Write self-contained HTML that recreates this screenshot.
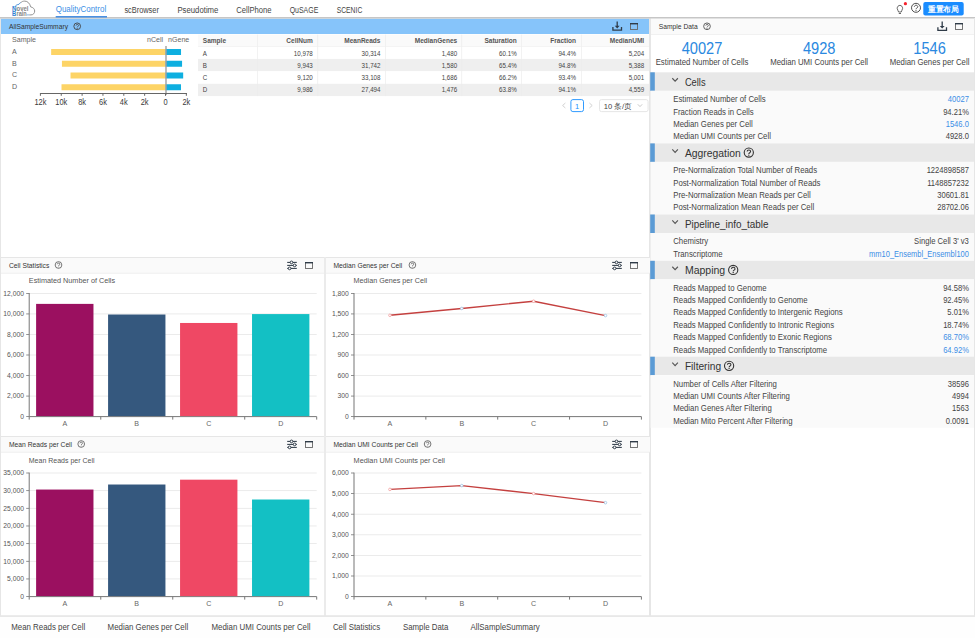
<!DOCTYPE html>
<html><head><meta charset="utf-8"><style>
html,body{margin:0;padding:0;background:#fff;width:975px;height:638px;overflow:hidden}
svg{display:block;font-family:"Liberation Sans",sans-serif}
</style></head><body>
<svg width="975" height="638" viewBox="0 0 975 638">
<rect x="0.00" y="17.00" width="975.00" height="1.30" fill="#c6c6c6"/>
<path d="M20.5,2.9 C21.5,1.6 23,1.1 24.8,1.1 C27.5,1.1 29.8,3.3 30.7,6.9 C33,7.3 34.7,9 34.7,11 C34.7,13.2 33.2,14.9 31,14.9 L29.5,14.9" stroke="#8c8c8c" stroke-width="0.95" fill="none"/>
<path d="M14.7,6.9 C15.5,5.6 16.8,4.6 18.9,4.3 C19.3,3.6 19.8,3.1 20.5,2.9" stroke="#3a86d4" stroke-width="0.95" fill="none"/>
<path d="M26.8,14.9 L29.6,14.9" stroke="#6e9fd0" stroke-width="0.8" fill="none"/>
<text x="11.9" y="10.6" font-size="6.6" font-weight="bold" fill="#2f80d2" textLength="4.5" lengthAdjust="spacingAndGlyphs">N</text>
<text x="16.5" y="10.7" font-size="6.9" font-weight="bold" fill="#858585" textLength="12" lengthAdjust="spacingAndGlyphs">ovel</text>
<text x="11.9" y="15.9" font-size="6.6" font-weight="bold" fill="#2f80d2" textLength="4.2" lengthAdjust="spacingAndGlyphs">B</text>
<text x="16.5" y="15.8" font-size="6.9" font-weight="bold" fill="#858585" textLength="10.3" lengthAdjust="spacingAndGlyphs">rain</text>
<text x="55.70" y="12.10" font-size="8.6" fill="#3b8fe6" text-anchor="start" textLength="50.49" lengthAdjust="spacingAndGlyphs">QualityControl</text>
<rect x="55.70" y="16.00" width="51.30" height="1.60" fill="#4a90e2"/>
<text x="124.40" y="12.50" font-size="8.5" fill="#444" text-anchor="start" textLength="34.50" lengthAdjust="spacingAndGlyphs">scBrowser</text>
<text x="177.40" y="12.50" font-size="8.5" fill="#444" text-anchor="start" textLength="41.00" lengthAdjust="spacingAndGlyphs">Pseudotime</text>
<text x="236.30" y="12.50" font-size="8.5" fill="#444" text-anchor="start" textLength="35.20" lengthAdjust="spacingAndGlyphs">CellPhone</text>
<text x="289.70" y="12.50" font-size="8.5" fill="#444" text-anchor="start" textLength="28.60" lengthAdjust="spacingAndGlyphs">QuSAGE</text>
<text x="336.70" y="12.50" font-size="8.5" fill="#444" text-anchor="start" textLength="25.60" lengthAdjust="spacingAndGlyphs">SCENIC</text>
<path d="M897.2,8.4 C897.2,6.6 898.4,5.4 899.9,5.4 C901.4,5.4 902.6,6.6 902.6,8.4 C902.6,9.8 901.4,10.6 901.2,12 L898.6,12 C898.4,10.6 897.2,9.8 897.2,8.4 Z M898.8,13.5 L901,13.5" stroke="#555" stroke-width="0.9" fill="none"/>
<circle cx="905.4" cy="3.7" r="1.6" fill="#f5222d"/>
<rect x="923.3" y="2" width="40.4" height="13.6" rx="2" fill="#1a8cff"/>
<text x="943.3" y="12.2" font-size="7.8" font-weight="bold" fill="#fff" text-anchor="middle" textLength="31" lengthAdjust="spacingAndGlyphs">重置布局</text>
<circle cx="916" cy="7.8" r="4.5" fill="none" stroke="#444" stroke-width="0.95"/>
<path d="M914.38,6.81 C914.38,4.74 917.80,4.74 917.80,6.81 C917.80,8.03 916.00,7.89 916.00,9.15" stroke="#444" stroke-width="0.9025" fill="none"/>
<circle cx="916" cy="10.32" r="0.57" fill="#444"/>
<rect x="0.00" y="18.00" width="1.00" height="598.00" fill="#e6e6e6"/>
<rect x="1.00" y="18.40" width="648.00" height="15.60" fill="#86c4fa"/>
<rect x="649.00" y="18.00" width="2.00" height="598.00" fill="#e6e6e6"/>
<rect x="0.00" y="18.00" width="975.00" height="0.80" fill="#d6d6d6"/>
<text x="9.00" y="28.70" font-size="7.6" fill="#333" text-anchor="start" textLength="59.00" lengthAdjust="spacingAndGlyphs">AllSampleSummary</text>
<circle cx="77.2" cy="26.3" r="3.35" fill="none" stroke="#444" stroke-width="0.9"/>
<path d="M75.99,25.56 C75.99,24.02 78.54,24.02 78.54,25.56 C78.54,26.47 77.20,26.37 77.20,27.30" stroke="#444" stroke-width="0.855" fill="none"/>
<circle cx="77.2" cy="28.18" r="0.54" fill="#444"/>
<path d="M612.9000000000001,27.099999999999998 L612.9000000000001,30.2 L621.5,30.2 L621.5,27.099999999999998" stroke="#2f3b48" stroke-width="1.3" fill="none"/>
<path d="M617.2,21.4 L617.2,26.9" stroke="#2f3b48" stroke-width="1.3" fill="none"/>
<path d="M614.8000000000001,25.7 L617.2,28.4 L619.6,25.7 Z" stroke="none" stroke-width="1" fill="#2f3b48"/>
<rect x="630.50" y="23.50" width="7.00" height="6.00" fill="none" stroke="#666" stroke-width="0.9"/>
<rect x="630.00" y="23.00" width="8.00" height="1.40" fill="#2f3b48"/>
<text x="12.00" y="41.80" font-size="7.9" fill="#666" text-anchor="start" textLength="24.00" lengthAdjust="spacingAndGlyphs">Sample</text>
<text x="147.00" y="41.90" font-size="7.9" fill="#666" text-anchor="start" textLength="16.13" lengthAdjust="spacingAndGlyphs">nCell</text>
<text x="168.00" y="41.90" font-size="7.9" fill="#666" text-anchor="start" textLength="21.26" lengthAdjust="spacingAndGlyphs">nGene</text>
<text x="12.00" y="53.80" font-size="7.9" fill="#666" text-anchor="start" textLength="4.72" lengthAdjust="spacingAndGlyphs">A</text>
<rect x="51.15" y="49.00" width="114.45" height="6.00" fill="#fdd466"/>
<rect x="165.60" y="49.00" width="15.43" height="6.00" fill="#0eafe0"/>
<text x="12.00" y="65.55" font-size="7.9" fill="#666" text-anchor="start" textLength="4.72" lengthAdjust="spacingAndGlyphs">B</text>
<rect x="61.94" y="60.75" width="103.66" height="6.00" fill="#fdd466"/>
<rect x="165.60" y="60.75" width="16.47" height="6.00" fill="#0eafe0"/>
<text x="12.00" y="77.30" font-size="7.9" fill="#666" text-anchor="start" textLength="5.11" lengthAdjust="spacingAndGlyphs">C</text>
<rect x="70.52" y="72.50" width="95.08" height="6.00" fill="#fdd466"/>
<rect x="165.60" y="72.50" width="17.58" height="6.00" fill="#0eafe0"/>
<text x="12.00" y="89.05" font-size="7.9" fill="#666" text-anchor="start" textLength="5.11" lengthAdjust="spacingAndGlyphs">D</text>
<rect x="61.50" y="84.25" width="104.10" height="6.00" fill="#fdd466"/>
<rect x="165.60" y="84.25" width="15.39" height="6.00" fill="#0eafe0"/>
<rect x="165.30" y="46.00" width="1.40" height="49.00" fill="#a0a0a0"/>
<rect x="40.40" y="93.00" width="146.60" height="1.00" fill="#666"/>
<rect x="39.90" y="93.00" width="1.00" height="2.80" fill="#666"/>
<text x="40.40" y="104.70" font-size="8.6" fill="#3a3a3a" text-anchor="middle" textLength="11.99" lengthAdjust="spacingAndGlyphs">12k</text>
<rect x="60.75" y="93.00" width="1.00" height="2.80" fill="#666"/>
<text x="61.25" y="104.70" font-size="8.6" fill="#3a3a3a" text-anchor="middle" textLength="11.99" lengthAdjust="spacingAndGlyphs">10k</text>
<rect x="81.60" y="93.00" width="1.00" height="2.80" fill="#666"/>
<text x="82.10" y="104.70" font-size="8.6" fill="#3a3a3a" text-anchor="middle" textLength="7.86" lengthAdjust="spacingAndGlyphs">8k</text>
<rect x="102.45" y="93.00" width="1.00" height="2.80" fill="#666"/>
<text x="102.95" y="104.70" font-size="8.6" fill="#3a3a3a" text-anchor="middle" textLength="7.86" lengthAdjust="spacingAndGlyphs">6k</text>
<rect x="123.30" y="93.00" width="1.00" height="2.80" fill="#666"/>
<text x="123.80" y="104.70" font-size="8.6" fill="#3a3a3a" text-anchor="middle" textLength="7.86" lengthAdjust="spacingAndGlyphs">4k</text>
<rect x="144.15" y="93.00" width="1.00" height="2.80" fill="#666"/>
<text x="144.65" y="104.70" font-size="8.6" fill="#3a3a3a" text-anchor="middle" textLength="7.86" lengthAdjust="spacingAndGlyphs">2k</text>
<rect x="165.00" y="93.00" width="1.00" height="2.80" fill="#666"/>
<text x="165.50" y="104.70" font-size="8.6" fill="#3a3a3a" text-anchor="middle" textLength="4.14" lengthAdjust="spacingAndGlyphs">0</text>
<rect x="185.85" y="93.00" width="1.00" height="2.80" fill="#666"/>
<text x="186.35" y="104.70" font-size="8.6" fill="#3a3a3a" text-anchor="middle" textLength="7.86" lengthAdjust="spacingAndGlyphs">2k</text>
<rect x="198.00" y="34.60" width="451.00" height="12.00" fill="#fafafa"/>
<rect x="198.00" y="46.60" width="451.00" height="12.30" fill="#ffffff"/>
<rect x="198.00" y="58.90" width="451.00" height="12.30" fill="#efefef"/>
<rect x="198.00" y="71.50" width="451.00" height="12.30" fill="#ffffff"/>
<rect x="198.00" y="83.80" width="451.00" height="12.30" fill="#efefef"/>
<rect x="257.30" y="34.60" width="0.70" height="61.50" fill="#ececec"/>
<rect x="317.40" y="34.60" width="0.70" height="61.50" fill="#ececec"/>
<rect x="385.20" y="34.60" width="0.70" height="61.50" fill="#ececec"/>
<rect x="461.40" y="34.60" width="0.70" height="61.50" fill="#ececec"/>
<rect x="521.20" y="34.60" width="0.70" height="61.50" fill="#ececec"/>
<rect x="581.00" y="34.60" width="0.70" height="61.50" fill="#ececec"/>
<rect x="198.00" y="46.30" width="451.00" height="0.60" fill="#eeeeee"/>
<text x="202.80" y="43.10" font-size="6.9" font-weight="bold" fill="#555" text-anchor="start" textLength="23.23" lengthAdjust="spacingAndGlyphs">Sample</text>
<text x="312.80" y="43.10" font-size="6.9" font-weight="bold" fill="#555" text-anchor="end" textLength="26.49" lengthAdjust="spacingAndGlyphs">CellNum</text>
<text x="380.50" y="43.10" font-size="6.9" font-weight="bold" fill="#555" text-anchor="end" textLength="36.29" lengthAdjust="spacingAndGlyphs">MeanReads</text>
<text x="457.20" y="43.10" font-size="6.9" font-weight="bold" fill="#555" text-anchor="end" textLength="42.45" lengthAdjust="spacingAndGlyphs">MedianGenes</text>
<text x="516.70" y="43.10" font-size="6.9" font-weight="bold" fill="#555" text-anchor="end" textLength="32.29" lengthAdjust="spacingAndGlyphs">Saturation</text>
<text x="576.00" y="43.10" font-size="6.9" font-weight="bold" fill="#555" text-anchor="end" textLength="25.76" lengthAdjust="spacingAndGlyphs">Fraction</text>
<text x="644.20" y="43.10" font-size="6.9" font-weight="bold" fill="#555" text-anchor="end" textLength="34.46" lengthAdjust="spacingAndGlyphs">MedianUMI</text>
<text x="202.80" y="55.70" font-size="7.5" fill="#444" text-anchor="start" textLength="4.14" lengthAdjust="spacingAndGlyphs">A</text>
<text x="312.80" y="55.70" font-size="7.5" fill="#444" text-anchor="end" textLength="18.99" lengthAdjust="spacingAndGlyphs">10,978</text>
<text x="380.50" y="55.70" font-size="7.5" fill="#444" text-anchor="end" textLength="18.99" lengthAdjust="spacingAndGlyphs">30,314</text>
<text x="457.20" y="55.70" font-size="7.5" fill="#444" text-anchor="end" textLength="15.54" lengthAdjust="spacingAndGlyphs">1,480</text>
<text x="516.70" y="55.70" font-size="7.5" fill="#444" text-anchor="end" textLength="17.61" lengthAdjust="spacingAndGlyphs">60.1%</text>
<text x="576.00" y="55.70" font-size="7.5" fill="#444" text-anchor="end" textLength="17.61" lengthAdjust="spacingAndGlyphs">94.4%</text>
<text x="644.20" y="55.70" font-size="7.5" fill="#444" text-anchor="end" textLength="15.54" lengthAdjust="spacingAndGlyphs">5,204</text>
<text x="202.80" y="67.70" font-size="7.5" fill="#444" text-anchor="start" textLength="4.14" lengthAdjust="spacingAndGlyphs">B</text>
<text x="312.80" y="67.70" font-size="7.5" fill="#444" text-anchor="end" textLength="15.54" lengthAdjust="spacingAndGlyphs">9,943</text>
<text x="380.50" y="67.70" font-size="7.5" fill="#444" text-anchor="end" textLength="18.99" lengthAdjust="spacingAndGlyphs">31,742</text>
<text x="457.20" y="67.70" font-size="7.5" fill="#444" text-anchor="end" textLength="15.54" lengthAdjust="spacingAndGlyphs">1,580</text>
<text x="516.70" y="67.70" font-size="7.5" fill="#444" text-anchor="end" textLength="17.61" lengthAdjust="spacingAndGlyphs">65.4%</text>
<text x="576.00" y="67.70" font-size="7.5" fill="#444" text-anchor="end" textLength="17.61" lengthAdjust="spacingAndGlyphs">94.8%</text>
<text x="644.20" y="67.70" font-size="7.5" fill="#444" text-anchor="end" textLength="15.54" lengthAdjust="spacingAndGlyphs">5,388</text>
<text x="202.80" y="80.10" font-size="7.5" fill="#444" text-anchor="start" textLength="4.48" lengthAdjust="spacingAndGlyphs">C</text>
<text x="312.80" y="80.10" font-size="7.5" fill="#444" text-anchor="end" textLength="15.54" lengthAdjust="spacingAndGlyphs">9,120</text>
<text x="380.50" y="80.10" font-size="7.5" fill="#444" text-anchor="end" textLength="18.99" lengthAdjust="spacingAndGlyphs">33,108</text>
<text x="457.20" y="80.10" font-size="7.5" fill="#444" text-anchor="end" textLength="15.54" lengthAdjust="spacingAndGlyphs">1,686</text>
<text x="516.70" y="80.10" font-size="7.5" fill="#444" text-anchor="end" textLength="17.61" lengthAdjust="spacingAndGlyphs">66.2%</text>
<text x="576.00" y="80.10" font-size="7.5" fill="#444" text-anchor="end" textLength="17.61" lengthAdjust="spacingAndGlyphs">93.4%</text>
<text x="644.20" y="80.10" font-size="7.5" fill="#444" text-anchor="end" textLength="15.54" lengthAdjust="spacingAndGlyphs">5,001</text>
<text x="202.80" y="92.20" font-size="7.5" fill="#444" text-anchor="start" textLength="4.48" lengthAdjust="spacingAndGlyphs">D</text>
<text x="312.80" y="92.20" font-size="7.5" fill="#444" text-anchor="end" textLength="15.54" lengthAdjust="spacingAndGlyphs">9,986</text>
<text x="380.50" y="92.20" font-size="7.5" fill="#444" text-anchor="end" textLength="18.99" lengthAdjust="spacingAndGlyphs">27,494</text>
<text x="457.20" y="92.20" font-size="7.5" fill="#444" text-anchor="end" textLength="15.54" lengthAdjust="spacingAndGlyphs">1,476</text>
<text x="516.70" y="92.20" font-size="7.5" fill="#444" text-anchor="end" textLength="17.61" lengthAdjust="spacingAndGlyphs">63.8%</text>
<text x="576.00" y="92.20" font-size="7.5" fill="#444" text-anchor="end" textLength="17.61" lengthAdjust="spacingAndGlyphs">94.1%</text>
<text x="644.20" y="92.20" font-size="7.5" fill="#444" text-anchor="end" textLength="15.54" lengthAdjust="spacingAndGlyphs">4,559</text>
<path d="M565.4,103 L562.6,105.5 L565.4,108" stroke="#c8c8c8" stroke-width="0.8" fill="none"/>
<rect x="570.9" y="99.6" width="12.6" height="12" rx="2" fill="#fff" stroke="#1890ff" stroke-width="0.9"/>
<text x="577.2" y="108.6" font-size="7.5" fill="#1890ff" text-anchor="middle">1</text>
<path d="M589.4,103 L592.2,105.5 L589.4,108" stroke="#c8c8c8" stroke-width="0.8" fill="none"/>
<rect x="599.5" y="99.6" width="48.6" height="12" rx="2" fill="#fff" stroke="#e3e3e3" stroke-width="0.9"/>
<text x="603.8" y="109" font-size="8" fill="#444" textLength="28" lengthAdjust="spacingAndGlyphs">10 条/页</text>
<path d="M637.8,104.3 L640,106.6 L642.2,104.3" stroke="#bbb" stroke-width="0.8" fill="none"/>
<rect x="974.00" y="18.00" width="1.00" height="598.00" fill="#e6e6e6"/>
<rect x="651.00" y="18.80" width="323.00" height="15.20" fill="#fafafa"/>
<rect x="651.00" y="34.00" width="323.00" height="0.80" fill="#eeeeee"/>
<text x="658.80" y="29.00" font-size="7.6" fill="#333" text-anchor="start" textLength="38.84" lengthAdjust="spacingAndGlyphs">Sample Data</text>
<circle cx="707" cy="26.3" r="3.35" fill="none" stroke="#555" stroke-width="0.9"/>
<path d="M705.79,25.56 C705.79,24.02 708.34,24.02 708.34,25.56 C708.34,26.47 707.00,26.37 707.00,27.30" stroke="#555" stroke-width="0.855" fill="none"/>
<circle cx="707" cy="28.18" r="0.54" fill="#555"/>
<path d="M937.9000000000001,27.3 L937.9000000000001,30.400000000000002 L946.5,30.400000000000002 L946.5,27.3" stroke="#2f3b48" stroke-width="1.3" fill="none"/>
<path d="M942.2,21.6 L942.2,27.1" stroke="#2f3b48" stroke-width="1.3" fill="none"/>
<path d="M939.8000000000001,25.900000000000002 L942.2,28.6 L944.6,25.900000000000002 Z" stroke="none" stroke-width="1" fill="#2f3b48"/>
<rect x="955.50" y="23.50" width="7.00" height="6.00" fill="none" stroke="#666" stroke-width="0.9"/>
<rect x="955.00" y="23.00" width="8.00" height="1.40" fill="#2f3b48"/>
<text x="702.00" y="54.10" font-size="17.0" fill="#2a88e0" text-anchor="middle" textLength="40.71" lengthAdjust="spacingAndGlyphs">40027</text>
<text x="702.00" y="64.80" font-size="8.2" fill="#444" text-anchor="middle" textLength="92.64" lengthAdjust="spacingAndGlyphs">Estimated Number of Cells</text>
<text x="819.20" y="54.10" font-size="17.0" fill="#2a88e0" text-anchor="middle" textLength="32.56" lengthAdjust="spacingAndGlyphs">4928</text>
<text x="819.20" y="64.80" font-size="8.2" fill="#444" text-anchor="middle" textLength="97.84" lengthAdjust="spacingAndGlyphs">Median UMI Counts per Cell</text>
<text x="929.60" y="54.10" font-size="17.0" fill="#2a88e0" text-anchor="middle" textLength="32.56" lengthAdjust="spacingAndGlyphs">1546</text>
<text x="929.60" y="64.80" font-size="8.2" fill="#444" text-anchor="middle" textLength="79.67" lengthAdjust="spacingAndGlyphs">Median Genes per Cell</text>
<rect x="650.60" y="72.30" width="323.40" height="18.50" fill="#e8e8e8"/>
<rect x="650.20" y="72.30" width="4.60" height="18.50" fill="#5b9bd5"/>
<path d="M672.3,78.25 L675.1,81.25 L677.9,78.25" stroke="#555" stroke-width="1.1" fill="none"/>
<text x="684.90" y="85.75" font-size="10.2" fill="#333" text-anchor="start" textLength="20.70" lengthAdjust="spacingAndGlyphs">Cells</text>
<rect x="650.60" y="90.80" width="323.40" height="52.60" fill="#fafafa"/>
<text x="673.20" y="102.10" font-size="8.2" fill="#444" text-anchor="start" textLength="92.52" lengthAdjust="spacingAndGlyphs">Estimated Number of Cells</text>
<text x="968.90" y="102.10" font-size="8.2" fill="#3a8ee6" text-anchor="end" textLength="21.13" lengthAdjust="spacingAndGlyphs">40027</text>
<text x="673.20" y="114.50" font-size="8.2" fill="#444" text-anchor="start" textLength="80.42" lengthAdjust="spacingAndGlyphs">Fraction Reads in Cells</text>
<text x="968.90" y="114.50" font-size="8.2" fill="#444" text-anchor="end" textLength="25.77" lengthAdjust="spacingAndGlyphs">94.21%</text>
<text x="673.20" y="126.90" font-size="8.2" fill="#444" text-anchor="start" textLength="79.57" lengthAdjust="spacingAndGlyphs">Median Genes per Cell</text>
<text x="968.90" y="126.90" font-size="8.2" fill="#3a8ee6" text-anchor="end" textLength="23.24" lengthAdjust="spacingAndGlyphs">1546.0</text>
<text x="673.20" y="139.30" font-size="8.2" fill="#444" text-anchor="start" textLength="97.72" lengthAdjust="spacingAndGlyphs">Median UMI Counts per Cell</text>
<text x="968.90" y="139.30" font-size="8.2" fill="#444" text-anchor="end" textLength="23.24" lengthAdjust="spacingAndGlyphs">4928.0</text>
<rect x="650.60" y="143.40" width="323.40" height="18.50" fill="#e8e8e8"/>
<rect x="650.20" y="143.40" width="4.60" height="18.50" fill="#5b9bd5"/>
<path d="M672.3,149.35 L675.1,152.35 L677.9,149.35" stroke="#555" stroke-width="1.1" fill="none"/>
<text x="684.90" y="156.85" font-size="10.2" fill="#333" text-anchor="start" textLength="55.90" lengthAdjust="spacingAndGlyphs">Aggregation</text>
<circle cx="748.8" cy="152.55" r="4.6" fill="none" stroke="#333" stroke-width="1.1"/>
<path d="M747.14,151.54 C747.14,149.42 750.64,149.42 750.64,151.54 C750.64,152.78 748.80,152.64 748.80,153.93" stroke="#333" stroke-width="1.045" fill="none"/>
<circle cx="748.8" cy="155.13" r="0.66" fill="#333"/>
<rect x="650.60" y="161.90" width="323.40" height="52.60" fill="#fafafa"/>
<text x="673.20" y="173.20" font-size="8.2" fill="#444" text-anchor="start" textLength="143.84" lengthAdjust="spacingAndGlyphs">Pre-Normalization Total Number of Reads</text>
<text x="968.90" y="173.20" font-size="8.2" fill="#444" text-anchor="end" textLength="42.26" lengthAdjust="spacingAndGlyphs">1224898587</text>
<text x="673.20" y="185.60" font-size="8.2" fill="#444" text-anchor="start" textLength="147.30" lengthAdjust="spacingAndGlyphs">Post-Normalization Total Number of Reads</text>
<text x="968.90" y="185.60" font-size="8.2" fill="#444" text-anchor="end" textLength="41.70" lengthAdjust="spacingAndGlyphs">1148857232</text>
<text x="673.20" y="198.00" font-size="8.2" fill="#444" text-anchor="start" textLength="137.49" lengthAdjust="spacingAndGlyphs">Pre-Normalization Mean Reads per Cell</text>
<text x="968.90" y="198.00" font-size="8.2" fill="#444" text-anchor="end" textLength="31.70" lengthAdjust="spacingAndGlyphs">30601.81</text>
<text x="673.20" y="210.40" font-size="8.2" fill="#444" text-anchor="start" textLength="140.96" lengthAdjust="spacingAndGlyphs">Post-Normalization Mean Reads per Cell</text>
<text x="968.90" y="210.40" font-size="8.2" fill="#444" text-anchor="end" textLength="31.70" lengthAdjust="spacingAndGlyphs">28702.06</text>
<rect x="650.60" y="214.50" width="323.40" height="18.50" fill="#e8e8e8"/>
<rect x="650.20" y="214.50" width="4.60" height="18.50" fill="#5b9bd5"/>
<path d="M672.3,220.45 L675.1,223.45 L677.9,220.45" stroke="#555" stroke-width="1.1" fill="none"/>
<text x="684.90" y="227.95" font-size="10.2" fill="#333" text-anchor="start" textLength="83.60" lengthAdjust="spacingAndGlyphs">Pipeline_info_table</text>
<rect x="650.60" y="233.00" width="323.40" height="27.80" fill="#fafafa"/>
<text x="673.20" y="244.30" font-size="8.2" fill="#444" text-anchor="start" textLength="35.01" lengthAdjust="spacingAndGlyphs">Chemistry</text>
<text x="968.90" y="244.30" font-size="8.2" fill="#444" text-anchor="end" textLength="54.80" lengthAdjust="spacingAndGlyphs">Single Cell 3' v3</text>
<text x="673.20" y="256.70" font-size="8.2" fill="#444" text-anchor="start" textLength="49.43" lengthAdjust="spacingAndGlyphs">Transcriptome</text>
<text x="968.90" y="256.70" font-size="8.2" fill="#3a8ee6" text-anchor="end" textLength="99.80" lengthAdjust="spacingAndGlyphs">mm10_Ensembl_Ensembl100</text>
<rect x="650.60" y="260.80" width="323.40" height="18.50" fill="#e8e8e8"/>
<rect x="650.20" y="260.80" width="4.60" height="18.50" fill="#5b9bd5"/>
<path d="M672.3,266.75 L675.1,269.75 L677.9,266.75" stroke="#555" stroke-width="1.1" fill="none"/>
<text x="684.90" y="274.25" font-size="10.2" fill="#333" text-anchor="start" textLength="40.30" lengthAdjust="spacingAndGlyphs">Mapping</text>
<circle cx="733.1999999999999" cy="269.95" r="4.6" fill="none" stroke="#333" stroke-width="1.1"/>
<path d="M731.54,268.94 C731.54,266.82 735.04,266.82 735.04,268.94 C735.04,270.18 733.20,270.04 733.20,271.33" stroke="#333" stroke-width="1.045" fill="none"/>
<circle cx="733.1999999999999" cy="272.53" r="0.66" fill="#333"/>
<rect x="650.60" y="279.30" width="323.40" height="77.40" fill="#fafafa"/>
<text x="673.20" y="290.60" font-size="8.2" fill="#444" text-anchor="start" textLength="93.41" lengthAdjust="spacingAndGlyphs">Reads Mapped to Genome</text>
<text x="968.90" y="290.60" font-size="8.2" fill="#444" text-anchor="end" textLength="25.77" lengthAdjust="spacingAndGlyphs">94.58%</text>
<text x="673.20" y="303.00" font-size="8.2" fill="#444" text-anchor="start" textLength="134.49" lengthAdjust="spacingAndGlyphs">Reads Mapped Confidently to Genome</text>
<text x="968.90" y="303.00" font-size="8.2" fill="#444" text-anchor="end" textLength="25.77" lengthAdjust="spacingAndGlyphs">92.45%</text>
<text x="673.20" y="315.40" font-size="8.2" fill="#444" text-anchor="start" textLength="169.52" lengthAdjust="spacingAndGlyphs">Reads Mapped Confidently to Intergenic Regions</text>
<text x="968.90" y="315.40" font-size="8.2" fill="#444" text-anchor="end" textLength="21.55" lengthAdjust="spacingAndGlyphs">5.01%</text>
<text x="673.20" y="327.80" font-size="8.2" fill="#444" text-anchor="start" textLength="160.87" lengthAdjust="spacingAndGlyphs">Reads Mapped Confidently to Intronic Regions</text>
<text x="968.90" y="327.80" font-size="8.2" fill="#444" text-anchor="end" textLength="25.77" lengthAdjust="spacingAndGlyphs">18.74%</text>
<text x="673.20" y="340.20" font-size="8.2" fill="#444" text-anchor="start" textLength="158.71" lengthAdjust="spacingAndGlyphs">Reads Mapped Confidently to Exonic Regions</text>
<text x="968.90" y="340.20" font-size="8.2" fill="#3a8ee6" text-anchor="end" textLength="25.77" lengthAdjust="spacingAndGlyphs">68.70%</text>
<text x="673.20" y="352.60" font-size="8.2" fill="#444" text-anchor="start" textLength="153.94" lengthAdjust="spacingAndGlyphs">Reads Mapped Confidently to Transcriptome</text>
<text x="968.90" y="352.60" font-size="8.2" fill="#3a8ee6" text-anchor="end" textLength="25.77" lengthAdjust="spacingAndGlyphs">64.92%</text>
<rect x="650.60" y="356.70" width="323.40" height="18.50" fill="#e8e8e8"/>
<rect x="650.20" y="356.70" width="4.60" height="18.50" fill="#5b9bd5"/>
<path d="M672.3,362.65 L675.1,365.65 L677.9,362.65" stroke="#555" stroke-width="1.1" fill="none"/>
<text x="684.90" y="370.15" font-size="10.2" fill="#333" text-anchor="start" textLength="36.20" lengthAdjust="spacingAndGlyphs">Filtering</text>
<circle cx="729.1" cy="365.84999999999985" r="4.6" fill="none" stroke="#333" stroke-width="1.1"/>
<path d="M727.44,364.84 C727.44,362.72 730.94,362.72 730.94,364.84 C730.94,366.08 729.10,365.94 729.10,367.23" stroke="#333" stroke-width="1.045" fill="none"/>
<circle cx="729.1" cy="368.43" r="0.66" fill="#333"/>
<rect x="650.60" y="375.20" width="323.40" height="52.60" fill="#fafafa"/>
<text x="673.20" y="386.50" font-size="8.2" fill="#444" text-anchor="start" textLength="103.76" lengthAdjust="spacingAndGlyphs">Number of Cells After Filtering</text>
<text x="968.90" y="386.50" font-size="8.2" fill="#444" text-anchor="end" textLength="21.13" lengthAdjust="spacingAndGlyphs">38596</text>
<text x="673.20" y="398.90" font-size="8.2" fill="#444" text-anchor="start" textLength="116.74" lengthAdjust="spacingAndGlyphs">Median UMI Counts After Filtering</text>
<text x="968.90" y="398.90" font-size="8.2" fill="#444" text-anchor="end" textLength="16.91" lengthAdjust="spacingAndGlyphs">4994</text>
<text x="673.20" y="411.30" font-size="8.2" fill="#444" text-anchor="start" textLength="98.59" lengthAdjust="spacingAndGlyphs">Median Genes After Filtering</text>
<text x="968.90" y="411.30" font-size="8.2" fill="#444" text-anchor="end" textLength="16.91" lengthAdjust="spacingAndGlyphs">1563</text>
<text x="673.20" y="423.70" font-size="8.2" fill="#444" text-anchor="start" textLength="119.34" lengthAdjust="spacingAndGlyphs">Median Mito Percent After Filtering</text>
<text x="968.90" y="423.70" font-size="8.2" fill="#444" text-anchor="end" textLength="23.24" lengthAdjust="spacingAndGlyphs">0.0091</text>
<rect x="650.00" y="615.20" width="325.00" height="1.80" fill="#e8e8e8"/>
<rect x="1.00" y="257.00" width="324.00" height="1.00" fill="#e6e6e6"/>
<rect x="1.00" y="258.00" width="324.00" height="15.00" fill="#fafafa"/>
<rect x="1.00" y="272.80" width="324.00" height="0.80" fill="#ececec"/>
<text x="9.00" y="267.70" font-size="7.6" fill="#333" text-anchor="start" textLength="40.33" lengthAdjust="spacingAndGlyphs">Cell Statistics</text>
<circle cx="58.5" cy="265.0" r="3.35" fill="none" stroke="#555" stroke-width="0.8"/>
<path d="M57.29,264.26 C57.29,262.72 59.84,262.72 59.84,264.26 C59.84,265.17 58.50,265.07 58.50,266.00" stroke="#555" stroke-width="0.76" fill="none"/>
<circle cx="58.5" cy="266.88" r="0.48" fill="#555"/>
<path d="M287.2,262.4 L296.8,262.4" stroke="#2f3b48" stroke-width="1.05" fill="none"/>
<circle cx="291.5" cy="262.4" r="1.35" fill="#fff" stroke="#2f3b48" stroke-width="1.0"/>
<path d="M287.2,265.4 L296.8,265.4" stroke="#2f3b48" stroke-width="1.05" fill="none"/>
<circle cx="294.59999999999997" cy="265.4" r="1.35" fill="#fff" stroke="#2f3b48" stroke-width="1.0"/>
<path d="M287.2,268.4 L296.8,268.4" stroke="#2f3b48" stroke-width="1.05" fill="none"/>
<circle cx="289.59999999999997" cy="268.4" r="1.35" fill="#fff" stroke="#2f3b48" stroke-width="1.0"/>
<rect x="305.50" y="262.50" width="7.00" height="6.00" fill="none" stroke="#666" stroke-width="0.9"/>
<rect x="305.00" y="262.00" width="8.00" height="1.40" fill="#2f3b48"/>
<rect x="326.00" y="257.00" width="324.00" height="1.00" fill="#e6e6e6"/>
<rect x="326.00" y="258.00" width="324.00" height="15.00" fill="#fafafa"/>
<rect x="326.00" y="272.80" width="324.00" height="0.80" fill="#ececec"/>
<text x="333.50" y="267.70" font-size="7.6" fill="#333" text-anchor="start" textLength="68.72" lengthAdjust="spacingAndGlyphs">Median Genes per Cell</text>
<circle cx="412.4" cy="265.0" r="3.35" fill="none" stroke="#555" stroke-width="0.8"/>
<path d="M411.19,264.26 C411.19,262.72 413.74,262.72 413.74,264.26 C413.74,265.17 412.40,265.07 412.40,266.00" stroke="#555" stroke-width="0.76" fill="none"/>
<circle cx="412.4" cy="266.88" r="0.48" fill="#555"/>
<path d="M612.2,262.4 L621.8000000000001,262.4" stroke="#2f3b48" stroke-width="1.05" fill="none"/>
<circle cx="616.5" cy="262.4" r="1.35" fill="#fff" stroke="#2f3b48" stroke-width="1.0"/>
<path d="M612.2,265.4 L621.8000000000001,265.4" stroke="#2f3b48" stroke-width="1.05" fill="none"/>
<circle cx="619.6" cy="265.4" r="1.35" fill="#fff" stroke="#2f3b48" stroke-width="1.0"/>
<path d="M612.2,268.4 L621.8000000000001,268.4" stroke="#2f3b48" stroke-width="1.05" fill="none"/>
<circle cx="614.6" cy="268.4" r="1.35" fill="#fff" stroke="#2f3b48" stroke-width="1.0"/>
<rect x="630.50" y="262.50" width="7.00" height="6.00" fill="none" stroke="#666" stroke-width="0.9"/>
<rect x="630.00" y="262.00" width="8.00" height="1.40" fill="#2f3b48"/>
<rect x="1.00" y="436.00" width="324.00" height="1.00" fill="#e6e6e6"/>
<rect x="1.00" y="437.00" width="324.00" height="15.00" fill="#fafafa"/>
<rect x="1.00" y="451.80" width="324.00" height="0.80" fill="#ececec"/>
<text x="9.00" y="446.70" font-size="7.6" fill="#333" text-anchor="start" textLength="63.12" lengthAdjust="spacingAndGlyphs">Mean Reads per Cell</text>
<circle cx="81.2" cy="444.0" r="3.35" fill="none" stroke="#555" stroke-width="0.8"/>
<path d="M79.99,443.26 C79.99,441.72 82.54,441.72 82.54,443.26 C82.54,444.17 81.20,444.07 81.20,445.00" stroke="#555" stroke-width="0.76" fill="none"/>
<circle cx="81.2" cy="445.88" r="0.48" fill="#555"/>
<path d="M287.2,441.4 L296.8,441.4" stroke="#2f3b48" stroke-width="1.05" fill="none"/>
<circle cx="291.5" cy="441.4" r="1.35" fill="#fff" stroke="#2f3b48" stroke-width="1.0"/>
<path d="M287.2,444.4 L296.8,444.4" stroke="#2f3b48" stroke-width="1.05" fill="none"/>
<circle cx="294.59999999999997" cy="444.4" r="1.35" fill="#fff" stroke="#2f3b48" stroke-width="1.0"/>
<path d="M287.2,447.4 L296.8,447.4" stroke="#2f3b48" stroke-width="1.05" fill="none"/>
<circle cx="289.59999999999997" cy="447.4" r="1.35" fill="#fff" stroke="#2f3b48" stroke-width="1.0"/>
<rect x="305.50" y="441.50" width="7.00" height="6.00" fill="none" stroke="#666" stroke-width="0.9"/>
<rect x="305.00" y="441.00" width="8.00" height="1.40" fill="#2f3b48"/>
<rect x="326.00" y="436.00" width="324.00" height="1.00" fill="#e6e6e6"/>
<rect x="326.00" y="437.00" width="324.00" height="15.00" fill="#fafafa"/>
<rect x="326.00" y="451.80" width="324.00" height="0.80" fill="#ececec"/>
<text x="333.50" y="446.70" font-size="7.6" fill="#333" text-anchor="start" textLength="84.40" lengthAdjust="spacingAndGlyphs">Median UMI Counts per Cell</text>
<circle cx="427.6" cy="444.0" r="3.35" fill="none" stroke="#555" stroke-width="0.8"/>
<path d="M426.39,443.26 C426.39,441.72 428.94,441.72 428.94,443.26 C428.94,444.17 427.60,444.07 427.60,445.00" stroke="#555" stroke-width="0.76" fill="none"/>
<circle cx="427.6" cy="445.88" r="0.48" fill="#555"/>
<path d="M612.2,441.4 L621.8000000000001,441.4" stroke="#2f3b48" stroke-width="1.05" fill="none"/>
<circle cx="616.5" cy="441.4" r="1.35" fill="#fff" stroke="#2f3b48" stroke-width="1.0"/>
<path d="M612.2,444.4 L621.8000000000001,444.4" stroke="#2f3b48" stroke-width="1.05" fill="none"/>
<circle cx="619.6" cy="444.4" r="1.35" fill="#fff" stroke="#2f3b48" stroke-width="1.0"/>
<path d="M612.2,447.4 L621.8000000000001,447.4" stroke="#2f3b48" stroke-width="1.05" fill="none"/>
<circle cx="614.6" cy="447.4" r="1.35" fill="#fff" stroke="#2f3b48" stroke-width="1.0"/>
<rect x="630.50" y="441.50" width="7.00" height="6.00" fill="none" stroke="#666" stroke-width="0.9"/>
<rect x="630.00" y="441.00" width="8.00" height="1.40" fill="#2f3b48"/>
<rect x="324.00" y="257.00" width="2.00" height="359.00" fill="#ebebeb"/>
<rect x="0.00" y="615.20" width="650.00" height="1.80" fill="#e8e8e8"/>
<text x="28.80" y="283.20" font-size="7.2" fill="#555" text-anchor="start" textLength="86.30" lengthAdjust="spacingAndGlyphs">Estimated Number of Cells</text>
<rect x="29.20" y="293.00" width="287.50" height="0.80" fill="#e6e6e6"/>
<rect x="26.20" y="293.00" width="3.00" height="0.80" fill="#777"/>
<text x="24.00" y="295.70" font-size="7.9" fill="#555" text-anchor="end" textLength="20.64" lengthAdjust="spacingAndGlyphs">12,000</text>
<rect x="29.20" y="313.53" width="287.50" height="0.80" fill="#e6e6e6"/>
<rect x="26.20" y="313.53" width="3.00" height="0.80" fill="#777"/>
<text x="24.00" y="316.23" font-size="7.9" fill="#555" text-anchor="end" textLength="20.64" lengthAdjust="spacingAndGlyphs">10,000</text>
<rect x="29.20" y="334.07" width="287.50" height="0.80" fill="#e6e6e6"/>
<rect x="26.20" y="334.07" width="3.00" height="0.80" fill="#777"/>
<text x="24.00" y="336.77" font-size="7.9" fill="#555" text-anchor="end" textLength="16.89" lengthAdjust="spacingAndGlyphs">8,000</text>
<rect x="29.20" y="354.60" width="287.50" height="0.80" fill="#e6e6e6"/>
<rect x="26.20" y="354.60" width="3.00" height="0.80" fill="#777"/>
<text x="24.00" y="357.30" font-size="7.9" fill="#555" text-anchor="end" textLength="16.89" lengthAdjust="spacingAndGlyphs">6,000</text>
<rect x="29.20" y="375.13" width="287.50" height="0.80" fill="#e6e6e6"/>
<rect x="26.20" y="375.13" width="3.00" height="0.80" fill="#777"/>
<text x="24.00" y="377.83" font-size="7.9" fill="#555" text-anchor="end" textLength="16.89" lengthAdjust="spacingAndGlyphs">4,000</text>
<rect x="29.20" y="395.67" width="287.50" height="0.80" fill="#e6e6e6"/>
<rect x="26.20" y="395.67" width="3.00" height="0.80" fill="#777"/>
<text x="24.00" y="398.37" font-size="7.9" fill="#555" text-anchor="end" textLength="16.89" lengthAdjust="spacingAndGlyphs">2,000</text>
<rect x="26.20" y="416.20" width="3.00" height="0.80" fill="#777"/>
<text x="24.00" y="418.90" font-size="7.9" fill="#555" text-anchor="end" textLength="3.75" lengthAdjust="spacingAndGlyphs">0</text>
<rect x="28.70" y="293.00" width="1.00" height="123.60" fill="#777"/>
<rect x="29.20" y="416.10" width="287.50" height="1.00" fill="#777"/>
<rect x="28.70" y="416.60" width="1.00" height="3.00" fill="#777"/>
<rect x="100.27" y="416.60" width="1.00" height="3.00" fill="#777"/>
<rect x="172.25" y="416.60" width="1.00" height="3.00" fill="#777"/>
<rect x="244.22" y="416.60" width="1.00" height="3.00" fill="#777"/>
<rect x="316.20" y="416.60" width="1.00" height="3.00" fill="#777"/>
<text x="64.79" y="426.20" font-size="7.0" fill="#666" text-anchor="middle" textLength="4.74" lengthAdjust="spacingAndGlyphs">A</text>
<rect x="36.11" y="303.89" width="57.36" height="112.21" fill="#9b1060"/>
<text x="136.76" y="426.20" font-size="7.0" fill="#666" text-anchor="middle" textLength="4.74" lengthAdjust="spacingAndGlyphs">B</text>
<rect x="108.08" y="314.52" width="57.36" height="101.58" fill="#35587e"/>
<text x="208.74" y="426.20" font-size="7.0" fill="#666" text-anchor="middle" textLength="5.13" lengthAdjust="spacingAndGlyphs">C</text>
<rect x="180.06" y="322.97" width="57.36" height="93.13" fill="#ef4864"/>
<text x="280.71" y="426.20" font-size="7.0" fill="#666" text-anchor="middle" textLength="5.13" lengthAdjust="spacingAndGlyphs">D</text>
<rect x="252.03" y="314.08" width="57.36" height="102.02" fill="#13c0c4"/>
<text x="353.60" y="283.20" font-size="7.2" fill="#555" text-anchor="start" textLength="73.50" lengthAdjust="spacingAndGlyphs">Median Genes per Cell</text>
<rect x="354.00" y="293.00" width="287.40" height="0.80" fill="#e6e6e6"/>
<rect x="351.00" y="293.00" width="3.00" height="0.80" fill="#777"/>
<text x="348.80" y="295.70" font-size="7.9" fill="#555" text-anchor="end" textLength="16.89" lengthAdjust="spacingAndGlyphs">1,800</text>
<rect x="354.00" y="313.53" width="287.40" height="0.80" fill="#e6e6e6"/>
<rect x="351.00" y="313.53" width="3.00" height="0.80" fill="#777"/>
<text x="348.80" y="316.23" font-size="7.9" fill="#555" text-anchor="end" textLength="16.89" lengthAdjust="spacingAndGlyphs">1,500</text>
<rect x="354.00" y="334.07" width="287.40" height="0.80" fill="#e6e6e6"/>
<rect x="351.00" y="334.07" width="3.00" height="0.80" fill="#777"/>
<text x="348.80" y="336.77" font-size="7.9" fill="#555" text-anchor="end" textLength="16.89" lengthAdjust="spacingAndGlyphs">1,200</text>
<rect x="354.00" y="354.60" width="287.40" height="0.80" fill="#e6e6e6"/>
<rect x="351.00" y="354.60" width="3.00" height="0.80" fill="#777"/>
<text x="348.80" y="357.30" font-size="7.9" fill="#555" text-anchor="end" textLength="11.26" lengthAdjust="spacingAndGlyphs">900</text>
<rect x="354.00" y="375.13" width="287.40" height="0.80" fill="#e6e6e6"/>
<rect x="351.00" y="375.13" width="3.00" height="0.80" fill="#777"/>
<text x="348.80" y="377.83" font-size="7.9" fill="#555" text-anchor="end" textLength="11.26" lengthAdjust="spacingAndGlyphs">600</text>
<rect x="354.00" y="395.67" width="287.40" height="0.80" fill="#e6e6e6"/>
<rect x="351.00" y="395.67" width="3.00" height="0.80" fill="#777"/>
<text x="348.80" y="398.37" font-size="7.9" fill="#555" text-anchor="end" textLength="11.26" lengthAdjust="spacingAndGlyphs">300</text>
<rect x="351.00" y="416.20" width="3.00" height="0.80" fill="#777"/>
<text x="348.80" y="418.90" font-size="7.9" fill="#555" text-anchor="end" textLength="3.75" lengthAdjust="spacingAndGlyphs">0</text>
<rect x="353.50" y="293.00" width="1.00" height="123.60" fill="#777"/>
<rect x="354.00" y="416.10" width="287.40" height="1.00" fill="#777"/>
<rect x="353.50" y="416.60" width="1.00" height="3.00" fill="#777"/>
<rect x="425.35" y="416.60" width="1.00" height="3.00" fill="#777"/>
<rect x="497.20" y="416.60" width="1.00" height="3.00" fill="#777"/>
<rect x="569.05" y="416.60" width="1.00" height="3.00" fill="#777"/>
<rect x="640.90" y="416.60" width="1.00" height="3.00" fill="#777"/>
<text x="389.93" y="426.20" font-size="7.0" fill="#666" text-anchor="middle" textLength="4.74" lengthAdjust="spacingAndGlyphs">A</text>
<text x="461.77" y="426.20" font-size="7.0" fill="#666" text-anchor="middle" textLength="4.74" lengthAdjust="spacingAndGlyphs">B</text>
<text x="533.62" y="426.20" font-size="7.0" fill="#666" text-anchor="middle" textLength="5.13" lengthAdjust="spacingAndGlyphs">C</text>
<text x="605.47" y="426.20" font-size="7.0" fill="#666" text-anchor="middle" textLength="5.13" lengthAdjust="spacingAndGlyphs">D</text>
<path d="M389.93,315.30 L461.77,308.46 L533.62,301.20 L605.47,315.58" stroke="#c4403f" stroke-width="1.4" fill="none"/>
<circle cx="389.93" cy="315.30" r="1.3" fill="#fff" stroke="#f2a0a0" stroke-width="0.8"/>
<circle cx="461.77" cy="308.46" r="1.3" fill="#fff" stroke="#9cc4e4" stroke-width="0.8"/>
<circle cx="533.62" cy="301.20" r="1.3" fill="#fff" stroke="#f2a0a0" stroke-width="0.8"/>
<circle cx="605.47" cy="315.58" r="1.3" fill="#fff" stroke="#9cc4e4" stroke-width="0.8"/>
<text x="28.80" y="462.80" font-size="7.2" fill="#555" text-anchor="start" textLength="65.70" lengthAdjust="spacingAndGlyphs">Mean Reads per Cell</text>
<rect x="29.20" y="472.60" width="287.50" height="0.80" fill="#e6e6e6"/>
<rect x="26.20" y="472.60" width="3.00" height="0.80" fill="#777"/>
<text x="24.00" y="475.30" font-size="7.9" fill="#555" text-anchor="end" textLength="20.64" lengthAdjust="spacingAndGlyphs">35,000</text>
<rect x="29.20" y="490.26" width="287.50" height="0.80" fill="#e6e6e6"/>
<rect x="26.20" y="490.26" width="3.00" height="0.80" fill="#777"/>
<text x="24.00" y="492.96" font-size="7.9" fill="#555" text-anchor="end" textLength="20.64" lengthAdjust="spacingAndGlyphs">30,000</text>
<rect x="29.20" y="507.91" width="287.50" height="0.80" fill="#e6e6e6"/>
<rect x="26.20" y="507.91" width="3.00" height="0.80" fill="#777"/>
<text x="24.00" y="510.61" font-size="7.9" fill="#555" text-anchor="end" textLength="20.64" lengthAdjust="spacingAndGlyphs">25,000</text>
<rect x="29.20" y="525.57" width="287.50" height="0.80" fill="#e6e6e6"/>
<rect x="26.20" y="525.57" width="3.00" height="0.80" fill="#777"/>
<text x="24.00" y="528.27" font-size="7.9" fill="#555" text-anchor="end" textLength="20.64" lengthAdjust="spacingAndGlyphs">20,000</text>
<rect x="29.20" y="543.23" width="287.50" height="0.80" fill="#e6e6e6"/>
<rect x="26.20" y="543.23" width="3.00" height="0.80" fill="#777"/>
<text x="24.00" y="545.93" font-size="7.9" fill="#555" text-anchor="end" textLength="20.64" lengthAdjust="spacingAndGlyphs">15,000</text>
<rect x="29.20" y="560.89" width="287.50" height="0.80" fill="#e6e6e6"/>
<rect x="26.20" y="560.89" width="3.00" height="0.80" fill="#777"/>
<text x="24.00" y="563.59" font-size="7.9" fill="#555" text-anchor="end" textLength="20.64" lengthAdjust="spacingAndGlyphs">10,000</text>
<rect x="29.20" y="578.54" width="287.50" height="0.80" fill="#e6e6e6"/>
<rect x="26.20" y="578.54" width="3.00" height="0.80" fill="#777"/>
<text x="24.00" y="581.24" font-size="7.9" fill="#555" text-anchor="end" textLength="16.89" lengthAdjust="spacingAndGlyphs">5,000</text>
<rect x="26.20" y="596.20" width="3.00" height="0.80" fill="#777"/>
<text x="24.00" y="598.90" font-size="7.9" fill="#555" text-anchor="end" textLength="3.75" lengthAdjust="spacingAndGlyphs">0</text>
<rect x="28.70" y="472.60" width="1.00" height="124.00" fill="#777"/>
<rect x="29.20" y="596.10" width="287.50" height="1.00" fill="#777"/>
<rect x="28.70" y="596.60" width="1.00" height="3.00" fill="#777"/>
<rect x="100.27" y="596.60" width="1.00" height="3.00" fill="#777"/>
<rect x="172.25" y="596.60" width="1.00" height="3.00" fill="#777"/>
<rect x="244.22" y="596.60" width="1.00" height="3.00" fill="#777"/>
<rect x="316.20" y="596.60" width="1.00" height="3.00" fill="#777"/>
<text x="64.79" y="606.20" font-size="7.0" fill="#666" text-anchor="middle" textLength="4.74" lengthAdjust="spacingAndGlyphs">A</text>
<rect x="36.11" y="489.55" width="57.36" height="106.55" fill="#9b1060"/>
<text x="136.76" y="606.20" font-size="7.0" fill="#666" text-anchor="middle" textLength="4.74" lengthAdjust="spacingAndGlyphs">B</text>
<rect x="108.08" y="484.51" width="57.36" height="111.59" fill="#35587e"/>
<text x="208.74" y="606.20" font-size="7.0" fill="#666" text-anchor="middle" textLength="5.13" lengthAdjust="spacingAndGlyphs">C</text>
<rect x="180.06" y="479.68" width="57.36" height="116.42" fill="#ef4864"/>
<text x="280.71" y="606.20" font-size="7.0" fill="#666" text-anchor="middle" textLength="5.13" lengthAdjust="spacingAndGlyphs">D</text>
<rect x="252.03" y="499.51" width="57.36" height="96.59" fill="#13c0c4"/>
<text x="353.60" y="462.80" font-size="7.2" fill="#555" text-anchor="start" textLength="91.40" lengthAdjust="spacingAndGlyphs">Median UMI Counts per Cell</text>
<rect x="354.00" y="472.60" width="287.40" height="0.80" fill="#e6e6e6"/>
<rect x="351.00" y="472.60" width="3.00" height="0.80" fill="#777"/>
<text x="348.80" y="475.30" font-size="7.9" fill="#555" text-anchor="end" textLength="16.89" lengthAdjust="spacingAndGlyphs">6,000</text>
<rect x="354.00" y="493.20" width="287.40" height="0.80" fill="#e6e6e6"/>
<rect x="351.00" y="493.20" width="3.00" height="0.80" fill="#777"/>
<text x="348.80" y="495.90" font-size="7.9" fill="#555" text-anchor="end" textLength="16.89" lengthAdjust="spacingAndGlyphs">5,000</text>
<rect x="354.00" y="513.80" width="287.40" height="0.80" fill="#e6e6e6"/>
<rect x="351.00" y="513.80" width="3.00" height="0.80" fill="#777"/>
<text x="348.80" y="516.50" font-size="7.9" fill="#555" text-anchor="end" textLength="16.89" lengthAdjust="spacingAndGlyphs">4,000</text>
<rect x="354.00" y="534.40" width="287.40" height="0.80" fill="#e6e6e6"/>
<rect x="351.00" y="534.40" width="3.00" height="0.80" fill="#777"/>
<text x="348.80" y="537.10" font-size="7.9" fill="#555" text-anchor="end" textLength="16.89" lengthAdjust="spacingAndGlyphs">3,000</text>
<rect x="354.00" y="555.00" width="287.40" height="0.80" fill="#e6e6e6"/>
<rect x="351.00" y="555.00" width="3.00" height="0.80" fill="#777"/>
<text x="348.80" y="557.70" font-size="7.9" fill="#555" text-anchor="end" textLength="16.89" lengthAdjust="spacingAndGlyphs">2,000</text>
<rect x="354.00" y="575.60" width="287.40" height="0.80" fill="#e6e6e6"/>
<rect x="351.00" y="575.60" width="3.00" height="0.80" fill="#777"/>
<text x="348.80" y="578.30" font-size="7.9" fill="#555" text-anchor="end" textLength="16.89" lengthAdjust="spacingAndGlyphs">1,000</text>
<rect x="351.00" y="596.20" width="3.00" height="0.80" fill="#777"/>
<text x="348.80" y="598.90" font-size="7.9" fill="#555" text-anchor="end" textLength="3.75" lengthAdjust="spacingAndGlyphs">0</text>
<rect x="353.50" y="472.60" width="1.00" height="124.00" fill="#777"/>
<rect x="354.00" y="596.10" width="287.40" height="1.00" fill="#777"/>
<rect x="353.50" y="596.60" width="1.00" height="3.00" fill="#777"/>
<rect x="425.35" y="596.60" width="1.00" height="3.00" fill="#777"/>
<rect x="497.20" y="596.60" width="1.00" height="3.00" fill="#777"/>
<rect x="569.05" y="596.60" width="1.00" height="3.00" fill="#777"/>
<rect x="640.90" y="596.60" width="1.00" height="3.00" fill="#777"/>
<text x="389.93" y="606.20" font-size="7.0" fill="#666" text-anchor="middle" textLength="4.74" lengthAdjust="spacingAndGlyphs">A</text>
<text x="461.77" y="606.20" font-size="7.0" fill="#666" text-anchor="middle" textLength="4.74" lengthAdjust="spacingAndGlyphs">B</text>
<text x="533.62" y="606.20" font-size="7.0" fill="#666" text-anchor="middle" textLength="5.13" lengthAdjust="spacingAndGlyphs">C</text>
<text x="605.47" y="606.20" font-size="7.0" fill="#666" text-anchor="middle" textLength="5.13" lengthAdjust="spacingAndGlyphs">D</text>
<path d="M389.93,489.40 L461.77,485.61 L533.62,493.58 L605.47,502.68" stroke="#c4403f" stroke-width="1.4" fill="none"/>
<circle cx="389.93" cy="489.40" r="1.3" fill="#fff" stroke="#f2a0a0" stroke-width="0.8"/>
<circle cx="461.77" cy="485.61" r="1.3" fill="#fff" stroke="#9cc4e4" stroke-width="0.8"/>
<circle cx="533.62" cy="493.58" r="1.3" fill="#fff" stroke="#f2a0a0" stroke-width="0.8"/>
<circle cx="605.47" cy="502.68" r="1.3" fill="#fff" stroke="#9cc4e4" stroke-width="0.8"/>
<rect x="0.00" y="617.00" width="975.00" height="21.00" fill="#fefefe"/>
<text x="11.20" y="630.00" font-size="8.2" fill="#444" text-anchor="start" textLength="74.02" lengthAdjust="spacingAndGlyphs">Mean Reads per Cell</text>
<text x="107.60" y="630.00" font-size="8.2" fill="#444" text-anchor="start" textLength="80.59" lengthAdjust="spacingAndGlyphs">Median Genes per Cell</text>
<text x="211.50" y="630.00" font-size="8.2" fill="#444" text-anchor="start" textLength="98.97" lengthAdjust="spacingAndGlyphs">Median UMI Counts per Cell</text>
<text x="332.90" y="630.00" font-size="8.2" fill="#444" text-anchor="start" textLength="47.29" lengthAdjust="spacingAndGlyphs">Cell Statistics</text>
<text x="402.90" y="630.00" font-size="8.2" fill="#444" text-anchor="start" textLength="45.55" lengthAdjust="spacingAndGlyphs">Sample Data</text>
<text x="470.60" y="630.00" font-size="8.2" fill="#444" text-anchor="start" textLength="69.19" lengthAdjust="spacingAndGlyphs">AllSampleSummary</text>
</svg></body></html>
